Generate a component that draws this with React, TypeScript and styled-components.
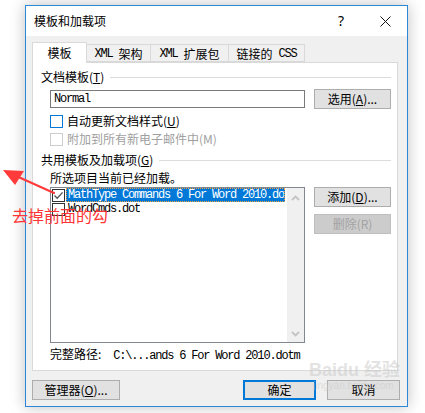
import styled, { createGlobalStyle } from 'styled-components';

const GlobalStyle = createGlobalStyle`
  html, body {
    margin: 0;
    padding: 0;
    background: #ffffff;
  }
  body {
    font-family: "Noto Sans CJK SC", "Noto Sans", sans-serif;
    font-size: 12px;
    color: #000;
  }
`;

const Page = styled.div`
  position: relative;
  width: 425px;
  height: 413px;
  overflow: hidden;
  padding: 5px 0 0 25px;
  box-sizing: border-box;
`;

const Dialog = styled.div`
  width: 383px;
  height: 402px;
  box-sizing: border-box;
  border: 1px solid #2b87d8;
  background: #f0f0f0;
  box-shadow: 0 0 14px rgba(0, 0, 0, 0.25);
  display: flex;
  flex-direction: column;
`;

const TitleBar = styled.div`
  height: 30px;
  flex: 0 0 30px;
  background: #ffffff;
  display: flex;
  align-items: center;
  padding-left: 8px;
  font-size: 12px;
  line-height: 12px;
`;

const TitleText = styled.span`
  flex: 1;
`;

const TitleButton = styled.div`
  width: 44px;
  height: 30px;
  display: flex;
  align-items: center;
  justify-content: center;
  font-size: 14px;
  font-family: "Noto Sans", sans-serif;
`;

const Body = styled.div`
  flex: 1;
  display: flex;
  flex-direction: column;
  padding: 6px 9px 6px 6px;
`;

const TabRow = styled.div`
  display: flex;
  align-items: flex-end;
  height: 21px;
  position: relative;
  z-index: 1;
  margin-bottom: -1px;
`;

const Tab = styled.div<{ $active?: boolean; $w: number }>`
  width: ${p => p.$w}px;
  height: ${p => (p.$active ? 21 : 18)}px;
  box-sizing: border-box;
  border: 1px solid #d9d9d9;
  border-bottom: ${p => (p.$active ? 'none' : '1px solid #d9d9d9')};
  background: ${p => (p.$active ? '#ffffff' : '#f0f0f0')};
  margin-left: ${p => (p.$active ? 0 : -1)}px;
  margin-bottom: ${p => (p.$active ? 0 : 1)}px;
  display: flex;
  align-items: center;
  justify-content: center;
  font-size: 12px;
  line-height: 12px;
  padding-top: ${p => (p.$active ? 0 : 1)}px;
  &:first-child {
    margin-left: 0;
  }
`;

const Panel = styled.div`
  height: 309px;
  box-sizing: border-box;
  background: #ffffff;
  border: 1px solid #d9d9d9;
  padding: 8px 6px 0 8px;
  display: flex;
  flex-direction: column;
`;

const GroupHeader = styled.div<{ $top?: number }>`
  display: flex;
  align-items: center;
  height: 12px;
  line-height: 12px;
  margin-top: ${p => p.$top ?? 0}px;
  white-space: nowrap;
  &::after {
    content: '';
    flex: 1;
    height: 1px;
    background: #dcdcdc;
    margin-left: 6px;
  }
`;

const Indented = styled.div<{ $top: number }>`
  margin-left: 9px;
  margin-top: ${p => p.$top}px;
  display: flex;
  align-items: center;
  gap: 9px;
`;

const TextInput = styled.div`
  width: 255px;
  height: 18px;
  box-sizing: border-box;
  border: 1px solid #7a7a7a;
  background: #fff;
  display: flex;
  align-items: center;
  padding-left: 3px;
`;

const Mono = styled.span`
  font-family: "Liberation Mono", monospace;
  font-size: 12px;
  letter-spacing: -1.2px;
  white-space: pre;
`;

const Button = styled.div<{ $w: number; $disabled?: boolean; $default?: boolean }>`
  width: ${p => p.$w}px;
  height: 20px;
  box-sizing: border-box;
  background: ${p => (p.$disabled ? '#cccccc' : '#e1e1e1')};
  border: ${p => (p.$default ? '2px solid #0078d7' : p.$disabled ? '1px solid #bfbfbf' : '1px solid #adadad')};
  color: ${p => (p.$disabled ? '#a3a3a3' : '#000')};
  display: flex;
  align-items: center;
  justify-content: center;
  font-size: 12px;
  line-height: 12px;
  white-space: nowrap;
`;

const Key = styled.u`
  text-decoration-thickness: 1px;
  text-underline-offset: 1px;
`;

const CheckRow = styled.div<{ $top?: number; $disabled?: boolean }>`
  margin-left: 9px;
  margin-top: ${p => p.$top ?? 0}px;
  height: 18px;
  display: flex;
  align-items: center;
  gap: 4px;
  line-height: 12px;
  color: ${p => (p.$disabled ? '#a0a0a0' : '#000')};
`;

const Box = styled.div<{ $tone: 'focus' | 'normal' | 'disabled' }>`
  width: 13px;
  height: 13px;
  box-sizing: border-box;
  flex: 0 0 13px;
  background: #fff;
  border: 1px solid
    ${p => (p.$tone === 'focus' ? '#0078d7' : p.$tone === 'disabled' ? '#cccccc' : '#333333')};
  display: flex;
  align-items: center;
  justify-content: center;
`;

const Note = styled.div<{ $top: number }>`
  margin-left: 9px;
  margin-top: ${p => p.$top}px;
  height: 12px;
  line-height: 12px;
  white-space: nowrap;
`;

const ListRow = styled.div`
  margin-left: 9px;
  margin-top: 3px;
  display: flex;
  align-items: flex-start;
  gap: 9px;
`;

const ListBox = styled.div`
  width: 255px;
  height: 156px;
  box-sizing: border-box;
  border: 1px solid #828790;
  background: #fff;
  display: flex;
`;

const Items = styled.div`
  flex: 1;
  min-width: 0;
  padding: 0 2px 0 1px;
  display: flex;
  flex-direction: column;
`;

const Item = styled.div`
  height: 14px;
  display: flex;
  align-items: center;
  gap: 1px;
`;

const ItemText = styled.div<{ $selected?: boolean }>`
  flex: ${p => (p.$selected ? 1 : '0 1 auto')};
  min-width: 0;
  height: 14px;
  box-sizing: border-box;
  overflow: hidden;
  display: flex;
  align-items: center;
  padding-left: 1px;
  background: ${p => (p.$selected ? '#0078d7' : 'transparent')};
  color: ${p => (p.$selected ? '#fff' : '#000')};
  border: 1px dotted ${p => (p.$selected ? '#f0a040' : 'transparent')};
`;

const ScrollBar = styled.div`
  width: 17px;
  flex: 0 0 17px;
  background: #f0f0f0;
  display: flex;
  flex-direction: column;
  justify-content: space-between;
`;

const ScrollArrow = styled.div<{ $h: number }>`
  height: ${p => p.$h}px;
  display: flex;
  align-items: center;
  justify-content: center;
`;

const SideButtons = styled.div`
  display: flex;
  flex-direction: column;
  gap: 7px;
`;

const BottomRow = styled.div`
  margin-top: 9px;
  margin-right: -2px;
  display: flex;
  justify-content: space-between;
`;

const ButtonGroup = styled.div`
  display: flex;
  gap: 11px;
`;

const Annotation = styled.div`
  position: absolute;
  left: 12px;
  top: 205px;
  font-size: 16px;
  line-height: 20px;
  color: #ff3434;
  white-space: nowrap;
`;

const ArrowLayer = styled.svg`
  position: absolute;
  left: 0;
  top: 160px;
`;

const Watermark = styled.div`
  position: absolute;
  left: 309px;
  top: 360px;
  color: rgba(200, 200, 200, 0.5);
  display: flex;
  flex-direction: column;
  white-space: nowrap;
  pointer-events: none;
`;

const WatermarkMain = styled.span`
  font-family: "Liberation Sans", "Noto Sans CJK SC", sans-serif;
  font-weight: bold;
  font-size: 18px;
  line-height: 20px;
`;

const WatermarkSub = styled.span`
  font-family: "Liberation Sans", sans-serif;
  font-size: 10px;
  line-height: 12px;
  padding-left: 4px;
`;

const Check = () => (
  <svg width="11" height="11" viewBox="0 0 11 11">
    <path d="M1.5 5.5 L4.2 8.3 L9.6 2.4" fill="none" stroke="#555" strokeWidth="1.3" />
  </svg>
);

const Chevron = ({ up }: { up?: boolean }) => (
  <svg width="9" height="6" viewBox="0 0 9 6">
    <path
      d={up ? 'M1 5 L4.5 1.5 L8 5' : 'M1 1 L4.5 4.5 L8 1'}
      fill="none"
      stroke="#c3c3c3"
      strokeWidth="1.8"
    />
  </svg>
);

export default function App() {
  return (
    <>
      <GlobalStyle />
      <Page>
        <Dialog>
          <TitleBar>
            <TitleText>模板和加载项</TitleText>
            <TitleButton>?</TitleButton>
            <TitleButton>
              <svg width="11" height="11" viewBox="0 0 11 11">
                <path d="M0.5 0.5 L10.5 10.5 M10.5 0.5 L0.5 10.5" stroke="#111" strokeWidth="1" />
              </svg>
            </TitleButton>
          </TitleBar>
          <Body>
            <TabRow>
              <Tab $active $w={55}>模板</Tab>
              <Tab $w={65}><Mono>XML </Mono>架构</Tab>
              <Tab $w={79}><Mono>XML </Mono>扩展包</Tab>
              <Tab $w={77}>链接的<Mono> CSS</Mono></Tab>
            </TabRow>
            <Panel>
              <GroupHeader>文档模板(<Key>T</Key>)</GroupHeader>
              <Indented $top={6}>
                <TextInput><Mono>Normal</Mono></TextInput>
                <Button $w={77}>选用(<Key>A</Key>)...</Button>
              </Indented>
              <CheckRow $top={3}>
                <Box $tone="focus" />
                <span>自动更新文档样式(<Key>U</Key>)</span>
              </CheckRow>
              <CheckRow $disabled>
                <Box $tone="disabled" />
                <span>附加到所有新电子邮件中(M)</span>
              </CheckRow>
              <GroupHeader $top={6}>共用模板及加载项(<Key>G</Key>)</GroupHeader>
              <Note $top={6}>所选项目当前已经加载。</Note>
              <ListRow>
                <ListBox>
                  <Items>
                    <Item>
                      <Box $tone="normal"><Check /></Box>
                      <ItemText $selected><Mono>MathType Commands 6 For Word 2010.dotm</Mono></ItemText>
                    </Item>
                    <Item>
                      <Box $tone="normal" />
                      <ItemText><Mono>WordCmds.dot</Mono></ItemText>
                    </Item>
                  </Items>
                  <ScrollBar>
                    <ScrollArrow $h={19}><Chevron up /></ScrollArrow>
                    <ScrollArrow $h={17}><Chevron /></ScrollArrow>
                  </ScrollBar>
                </ListBox>
                <SideButtons>
                  <Button $w={77}>添加(<Key>D</Key>)...</Button>
                  <Button $w={77} $disabled>删除(R)</Button>
                </SideButtons>
              </ListRow>
              <Note $top={5}>
                完整路径:<Mono>  C:\...ands 6 For Word 2010.dotm</Mono>
              </Note>
            </Panel>
            <BottomRow>
              <Button $w={88}>管理器(<Key>O</Key>)...</Button>
              <ButtonGroup>
                <Button $w={73} $default>确定</Button>
                <Button $w={73}>取消</Button>
              </ButtonGroup>
            </BottomRow>
          </Body>
        </Dialog>

        <ArrowLayer width="70" height="45" viewBox="0 0 70 45">
          <path d="M54 33 L14 15" stroke="#ff3a3a" strokeWidth="2.2" strokeLinecap="round" />
          <polygon points="3,10 24,11 15,25" fill="#ff3a3a" />
        </ArrowLayer>
        <Annotation>去掉前面的勾</Annotation>
        <Watermark>
          <WatermarkMain>Baidu 经验</WatermarkMain>
          <WatermarkSub>jingyan.baidu.com</WatermarkSub>
        </Watermark>
      </Page>
    </>
  );
}
